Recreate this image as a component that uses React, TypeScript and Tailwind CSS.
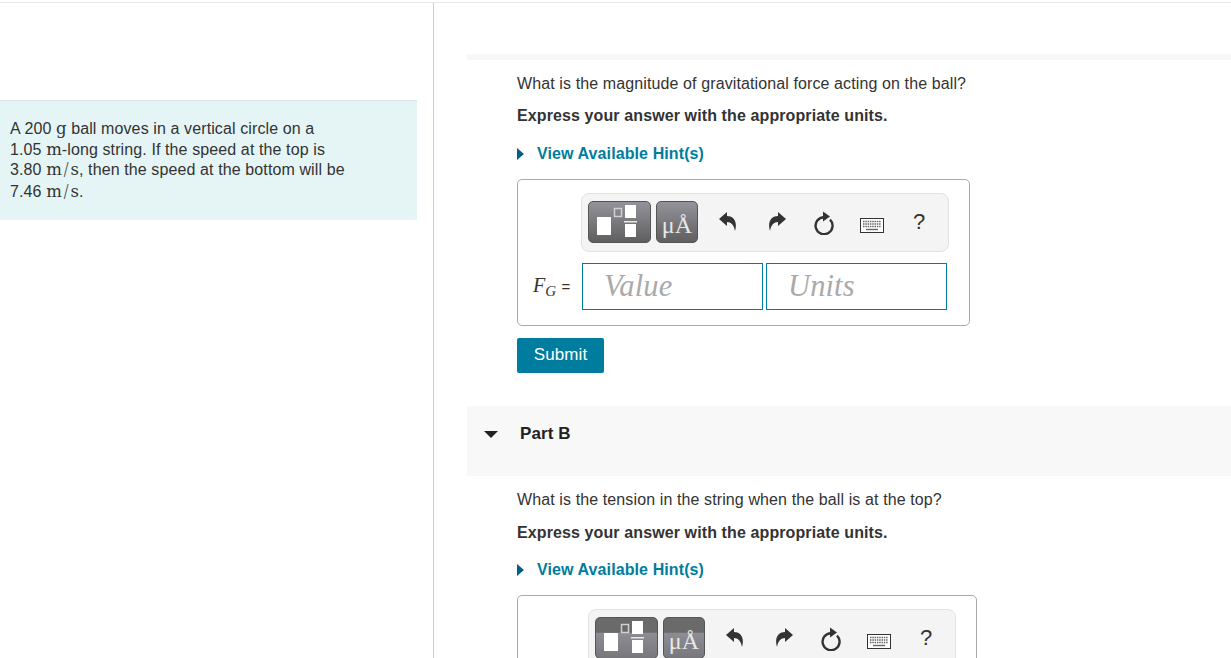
import React from "react";

const Unit = ({ children }: { children: React.ReactNode }) => (
  <span className="font-['DejaVu_Serif',serif] text-[16.5px] leading-[0] tracking-normal text-[#333]">{children}</span>
);

const Slash = () => <span className="mx-[2px] inline-block scale-y-[1.3] font-['Liberation_Serif',serif] text-[17px]">/</span>;

const TemplateIcon = () => (
  <svg width="63" height="42" viewBox="0 0 63 42" className="block">
    <rect x="8" y="15" width="14" height="18" fill="#fff" />
    <rect x="25.5" y="6.5" width="7" height="8" fill="none" stroke="#d0d0d0" strokeWidth="1.5" />
    <rect x="36" y="3" width="11" height="13" fill="#fff" />
    <rect x="35" y="19" width="13" height="1.5" fill="#e8e8e8" />
    <rect x="36" y="22" width="11" height="13" fill="#fff" />
  </svg>
);

const UndoIcon = ({ flip }: { flip?: boolean }) => (
  <svg width="18" height="20" viewBox="0 0 18 20" className={flip ? "-scale-x-100" : ""}>
    <path d="M0 7 L8 0 V4 C14 4 19 9 16 19 C15 13 12 10 8 10 V14 Z" fill="#333" />
  </svg>
);

const ResetIcon = () => (
  <svg width="22" height="24" viewBox="0 0 22 24">
    <path d="M11 6.2 A8.5 8.5 0 1 0 17 8.6" fill="none" stroke="#333" strokeWidth="2.4" />
    <path d="M10 0.5 L17 5.5 L10 10.5 Z" fill="#333" />
  </svg>
);

const KeyboardIcon = () => (
  <svg width="24" height="15" viewBox="0 0 24 15">
    <rect x="0.5" y="0.5" width="23" height="14" fill="#fff" stroke="#333" />
    <path d="M3 3.5 H21 M3 6 H21 M3 8.5 H21" stroke="#666" strokeWidth="1.4" strokeDasharray="1.5 0.8" />
    <path d="M6 11.5 H18" stroke="#666" strokeWidth="1.4" />
  </svg>
);

const Toolbar = ({ hover }: { hover?: boolean }) => {
  const btn = hover
    ? "bg-[linear-gradient(#6a6a6a_0%,#6a6a6a_36%,#8d8d94_37%,#77777c_100%)]"
    : "bg-[linear-gradient(#93939b,#5f5f5f)]";
  return (
    <div className="flex h-[59px] w-[368px] items-start rounded-lg border border-[#e2e2e2] bg-[#f4f4f4] pl-[6px] pt-[7px]">
      <div className={`h-[42px] w-[63px] rounded-[5px] border border-[#555] ${btn}`}>
        <TemplateIcon />
      </div>
      <div className={`ml-[5px] flex h-[42px] w-[42px] items-end justify-center rounded-[5px] border border-[#555] pb-[4px] font-['Liberation_Serif',serif] text-[24px] leading-[26px] text-[#e8e8e8] ${btn}`}>
        μÅ
      </div>
      <div className="ml-[21px] mt-[11px]"><UndoIcon /></div>
      <div className="ml-[31px] mt-[11px]"><UndoIcon flip /></div>
      <div className="ml-[27px] mt-[10px]"><ResetIcon /></div>
      <div className="ml-[25px] mt-[17px]"><KeyboardIcon /></div>
      <div className="ml-[29px] mt-[8px] text-[22px] leading-[26px] text-[#333]">?</div>
    </div>
  );
};

const Hint = () => (
  <div className="flex items-center font-bold tracking-[0.1px] text-[#007c9e]">
    <span className="h-0 w-0 border-y-[6px] border-l-[7px] border-y-transparent border-l-[#005f87]" />
    <span className="ml-[13px]">View Available Hint(s)</span>
  </div>
);

const inputClass =
  "h-[47px] w-[181px] border border-[#007c9e] bg-white pl-[21px] font-['Liberation_Serif',serif] text-[30.5px] italic outline-none placeholder:text-[#aaa]";

export default function App() {
  return (
    <div className="h-[658px] w-[1231px] overflow-hidden bg-white font-['Liberation_Sans',sans-serif] text-[16px] tracking-[0.11px] text-[#333]">
      <div className="mt-[2px] flex h-[656px] border-t border-[#e6e6e6]">
        <aside className="w-[434px] shrink-0 border-r border-[#c9d1d8] pt-[97px]">
          <div className="h-[120px] w-[417px] border-t border-[#d9e2e6] bg-[#e5f5f6] pl-[10px] pt-[18px] leading-[20.5px]">
            <p>A 200 <Unit>g</Unit> ball moves in a vertical circle on a</p>
            <p>1.05 <Unit>m</Unit>-long string. If the speed at the top is</p>
            <p>3.80 <Unit>m<Slash />s</Unit>, then the speed at the bottom will be</p>
            <p className="mt-[1px]">7.46 <Unit>m<Slash />s</Unit>.</p>
          </div>
        </aside>

        <main className="ml-[33px] min-w-0 flex-1 pt-[51px]">
          <div className="h-[6px] bg-[#f7f7f7]" />
          <div className="pl-[50px]">
            <p className="mt-[14px] leading-[20px]">What is the magnitude of gravitational force acting on the ball?</p>
            <p className="mt-[12px] font-bold leading-[20px]">Express your answer with the appropriate units.</p>
            <div className="mt-[17px] leading-[22px]"><Hint /></div>
            <div className="mt-[14px] h-[147px] w-[453px] rounded-[5px] border border-[#aaa] pl-[63px] pt-[13px]">
              <Toolbar />
              <div className="relative ml-[1px] mt-[11px] flex gap-[3px]">
                <span className="absolute left-[-49px] top-[9px] whitespace-nowrap font-['Liberation_Serif',serif] text-[20px] leading-[26px]">
                  <i>F<sub className="text-[15px]">G</sub></i> <span className="font-['Liberation_Sans',sans-serif] text-[15px]">=</span>
                </span>
                <input className={inputClass} placeholder="Value" />
                <input className={inputClass} placeholder="Units" />
              </div>
            </div>
            <button className="mt-[12px] block h-[35px] w-[87px] rounded-[2px] bg-[#007c9e] pb-[1px] text-center text-[17px] text-white">Submit</button>
          </div>

          <div className="mt-[33px] flex h-[70px] items-start bg-[#f8f8f8] pl-[17px] pt-[18px]">
            <span className="mt-[7px] h-0 w-0 border-x-[7px] border-t-[7px] border-x-transparent border-t-[#222]" />
            <span className="ml-[22px] text-[17px] font-bold leading-[20px] text-[#222]">Part B</span>
          </div>

          <div className="pl-[50px]">
            <p className="mt-[14px] leading-[20px]">What is the tension in the string when the ball is at the top?</p>
            <p className="mt-[13px] font-bold leading-[20px]">Express your answer with the appropriate units.</p>
            <div className="mt-[16px] leading-[22px]"><Hint /></div>
            <div className="mt-[14px] h-[147px] w-[460px] rounded-[5px] border border-[#aaa] pl-[70px] pt-[13px]">
              <Toolbar hover />
            </div>
          </div>
        </main>
      </div>
    </div>
  );
}
